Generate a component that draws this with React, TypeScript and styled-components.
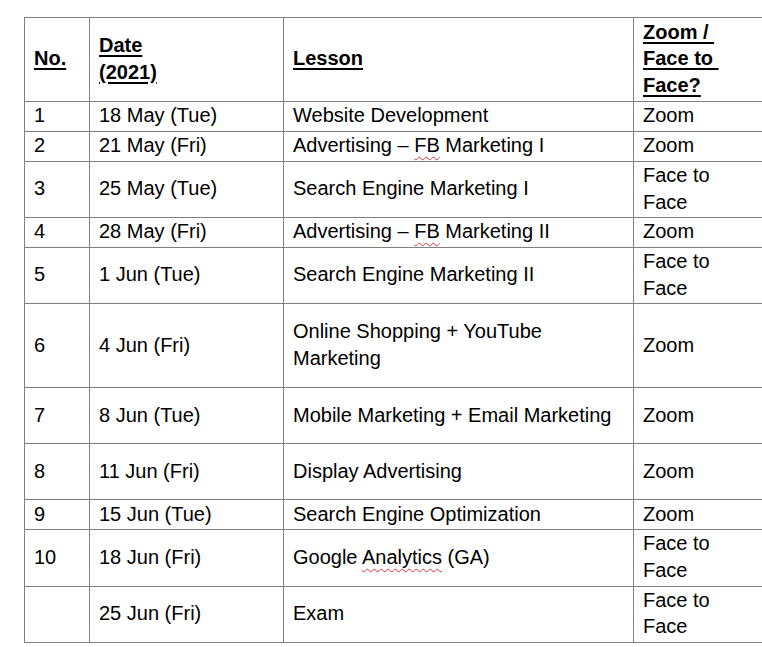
import styled, { createGlobalStyle } from 'styled-components';

const GlobalStyle = createGlobalStyle`
  html, body {
    margin: 0;
    padding: 0;
    background: #ffffff;
    overflow: hidden;
  }
`;

const Page = styled.div`
  width: 762px;
  height: 647px;
  padding: 17px 0 0 24px;
  box-sizing: border-box;
  overflow: hidden;
  font-family: 'Liberation Sans', Arial, sans-serif;
  font-size: 20px;
  line-height: 26.6px;
  color: #000;
`;

const Table = styled.table`
  border-collapse: collapse;
  table-layout: fixed;
  width: 741px;
`;

const Row = styled.tr<{ $h: number }>`
  height: ${({ $h }) => $h}px;
`;

const Cell = styled.td`
  border: 1px solid #7f7f7f;
  padding: 0 12px 2px 9px;
  vertical-align: middle;
  text-align: left;
`;

const HeadCell = styled(Cell).attrs({ as: 'th' })`
  font-weight: bold;
`;

const Underlined = styled.span`
  text-decoration: underline;
  text-decoration-thickness: 2px;
  text-underline-offset: 3px;
`;

const Misspelt = styled.span`
  text-decoration: underline wavy #e03030;
  text-decoration-thickness: 1px;
  text-underline-offset: 4px;
`;

type Lesson = {
  no: string;
  date: string;
  lesson: React.ReactNode;
  mode: string;
  h: number;
};

const lessons: Lesson[] = [
  { no: '1', date: '18 May (Tue)', lesson: 'Website Development', mode: 'Zoom', h: 30 },
  {
    no: '2',
    date: '21 May (Fri)',
    lesson: (
      <>
        Advertising – <Misspelt>FB</Misspelt> Marketing I
      </>
    ),
    mode: 'Zoom',
    h: 30,
  },
  { no: '3', date: '25 May (Tue)', lesson: 'Search Engine Marketing I', mode: 'Face to Face', h: 56 },
  {
    no: '4',
    date: '28 May (Fri)',
    lesson: (
      <>
        Advertising – <Misspelt>FB</Misspelt> Marketing II
      </>
    ),
    mode: 'Zoom',
    h: 30,
  },
  { no: '5', date: '1 Jun (Tue)', lesson: 'Search Engine Marketing II', mode: 'Face to Face', h: 56 },
  { no: '6', date: '4 Jun (Fri)', lesson: 'Online Shopping + YouTube Marketing', mode: 'Zoom', h: 84 },
  { no: '7', date: '8 Jun (Tue)', lesson: 'Mobile Marketing + Email Marketing', mode: 'Zoom', h: 56 },
  { no: '8', date: '11 Jun (Fri)', lesson: 'Display Advertising', mode: 'Zoom', h: 56 },
  { no: '9', date: '15 Jun (Tue)', lesson: 'Search Engine Optimization', mode: 'Zoom', h: 30 },
  {
    no: '10',
    date: '18 Jun (Fri)',
    lesson: (
      <>
        Google <Misspelt>Analytics</Misspelt> (GA)
      </>
    ),
    mode: 'Face to Face',
    h: 56,
  },
  { no: '', date: '25 Jun (Fri)', lesson: 'Exam', mode: 'Face to Face', h: 56 },
];

export default function App() {
  return (
    <>
      <GlobalStyle />
      <Page>
        <Table>
          <colgroup>
            <col style={{ width: 65 }} />
            <col style={{ width: 194 }} />
            <col style={{ width: 350 }} />
            <col style={{ width: 132 }} />
          </colgroup>
          <thead>
            <Row $h={84}>
              <HeadCell>
                <Underlined>No.</Underlined>
              </HeadCell>
              <HeadCell>
                <Underlined>Date</Underlined>
                <br />
                <Underlined>(2021)</Underlined>
              </HeadCell>
              <HeadCell>
                <Underlined>Lesson</Underlined>
              </HeadCell>
              <HeadCell>
                <Underlined>Zoom /&nbsp;</Underlined>
                <br />
                <Underlined>Face to&nbsp;</Underlined>
                <br />
                <Underlined>Face?</Underlined>
              </HeadCell>
            </Row>
          </thead>
          <tbody>
            {lessons.map((l, i) => (
              <Row key={i} $h={l.h}>
                <Cell>{l.no}</Cell>
                <Cell>{l.date}</Cell>
                <Cell>{l.lesson}</Cell>
                <Cell>{l.mode}</Cell>
              </Row>
            ))}
          </tbody>
        </Table>
      </Page>
    </>
  );
}
